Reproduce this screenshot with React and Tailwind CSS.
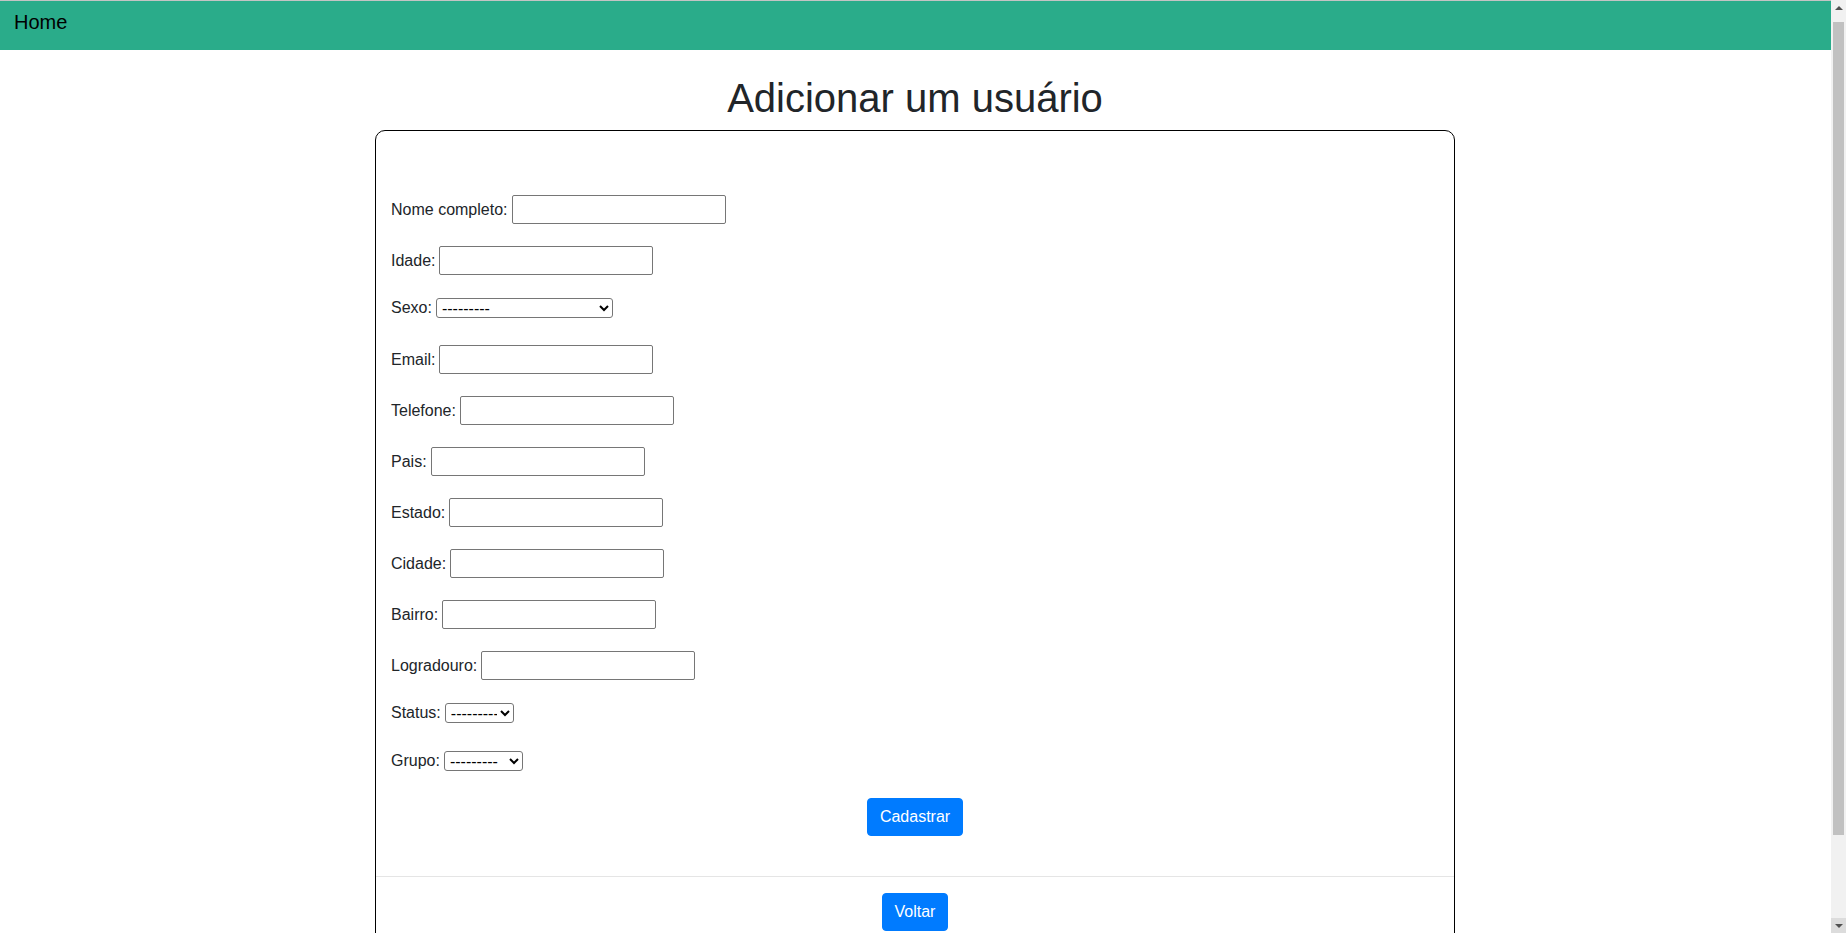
import React, { useState } from "react";

const campos = [
  { name: "nome", label: "Nome completo:", type: "text" },
  { name: "idade", label: "Idade:", type: "text" },
  { name: "sexo", label: "Sexo:", type: "select", width: "w-[177px]" },
  { name: "email", label: "Email:", type: "text" },
  { name: "telefone", label: "Telefone:", type: "text" },
  { name: "pais", label: "Pais:", type: "text" },
  { name: "estado", label: "Estado:", type: "text" },
  { name: "cidade", label: "Cidade:", type: "text" },
  { name: "bairro", label: "Bairro:", type: "text" },
  { name: "logradouro", label: "Logradouro:", type: "text" },
  { name: "status", label: "Status:", type: "select", width: "w-[69px]" },
  { name: "grupo", label: "Grupo:", type: "select", width: "w-[79px]" },
];

// barra de rolagem desenhada, igual à do print
const Scrollbar = () => (
  <div className="fixed top-0 right-0 flex h-[933px] w-[15px] flex-col bg-[#f1f1f1]">
    <div className="flex h-[15px] items-center justify-center">
      <div className="h-0 w-0 border-x-[4px] border-b-[4px] border-x-transparent border-b-[#505050]" />
    </div>
    <div className="mx-auto mt-[7px] h-[813px] w-[11px] bg-[#c1c1c1]" />
    <div className="flex-1" />
    <div className="flex h-[15px] items-center justify-center bg-[#dcdcdc]">
      <div className="h-0 w-0 border-x-[4px] border-t-[4px] border-x-transparent border-t-[#505050]" />
    </div>
  </div>
);

const App = () => {
  const [form, setForm] = useState({});

  const handleChange = (e) => {
    setForm((prev) => ({ ...prev, [e.target.name]: e.target.value }));
  };

  return (
    <div className="min-h-[1037px] w-[1830px] bg-white font-['Liberation_Sans',Arial,sans-serif] text-[#212529]">
      <nav className="h-[50px] w-[1831px] border-t border-[#c4c4c4] bg-[#2aac8a] pl-[14px] pt-[6px]">
        <a href="#" className="text-[20px] leading-[30px] text-black">
          Home
        </a>
      </nav>

      <h1 className="mt-[24px] mb-[8px] text-center text-[40px] leading-[48px] font-normal">
        Adicionar um usuário
      </h1>

      <div className="mx-auto w-[1080px] rounded-[10px] border border-black">
        <form className="px-[15px] pt-[61px]" onSubmit={(e) => e.preventDefault()}>
          {campos.map((campo) =>
            campo.type === "select" ? (
              <p key={campo.name} className="mb-[16px] flex h-[32px] items-start gap-[4px] pt-[4px]">
                <label htmlFor={campo.name} className="text-[16px] leading-[20px]">
                  {campo.label}
                </label>
                <select
                  id={campo.name}
                  name={campo.name}
                  value={form[campo.name] || ""}
                  onChange={handleChange}
                  className={`h-[20px] ${campo.width} rounded-[3px] border border-[#767676] bg-white pl-[1px] text-[16px] leading-[18px] text-black`}
                >
                  <option value="">---------</option>
                </select>
              </p>
            ) : (
              <p key={campo.name} className="mb-[16px] flex h-[35px] items-center gap-[4px]">
                <label htmlFor={campo.name} className="text-[16px] leading-[24px]">
                  {campo.label}
                </label>
                <input
                  type={campo.type}
                  id={campo.name}
                  name={campo.name}
                  value={form[campo.name] || ""}
                  onChange={handleChange}
                  className="h-[29px] w-[214px] rounded-[2px] border border-[#767676] bg-white px-[2px] text-[16px]"
                />
              </p>
            )
          )}

          <div className="flex justify-center pt-[3px] pb-[40px]">
            <button
              type="submit"
              className="rounded-[4px] border border-[#007bff] bg-[#007bff] px-[12px] py-[6px] text-[16px] leading-[24px] text-white"
            >
              Cadastrar
            </button>
          </div>
        </form>

        <div className="border-t border-[#e5e5e5] pt-[16px] pb-[16px]">
          <div className="flex justify-center">
            <a
              href="#"
              className="rounded-[4px] border border-[#007bff] bg-[#007bff] px-[12px] py-[6px] text-[16px] leading-[24px] text-white"
            >
              Voltar
            </a>
          </div>
        </div>
      </div>

      <Scrollbar />
    </div>
  );
};

export default App;
